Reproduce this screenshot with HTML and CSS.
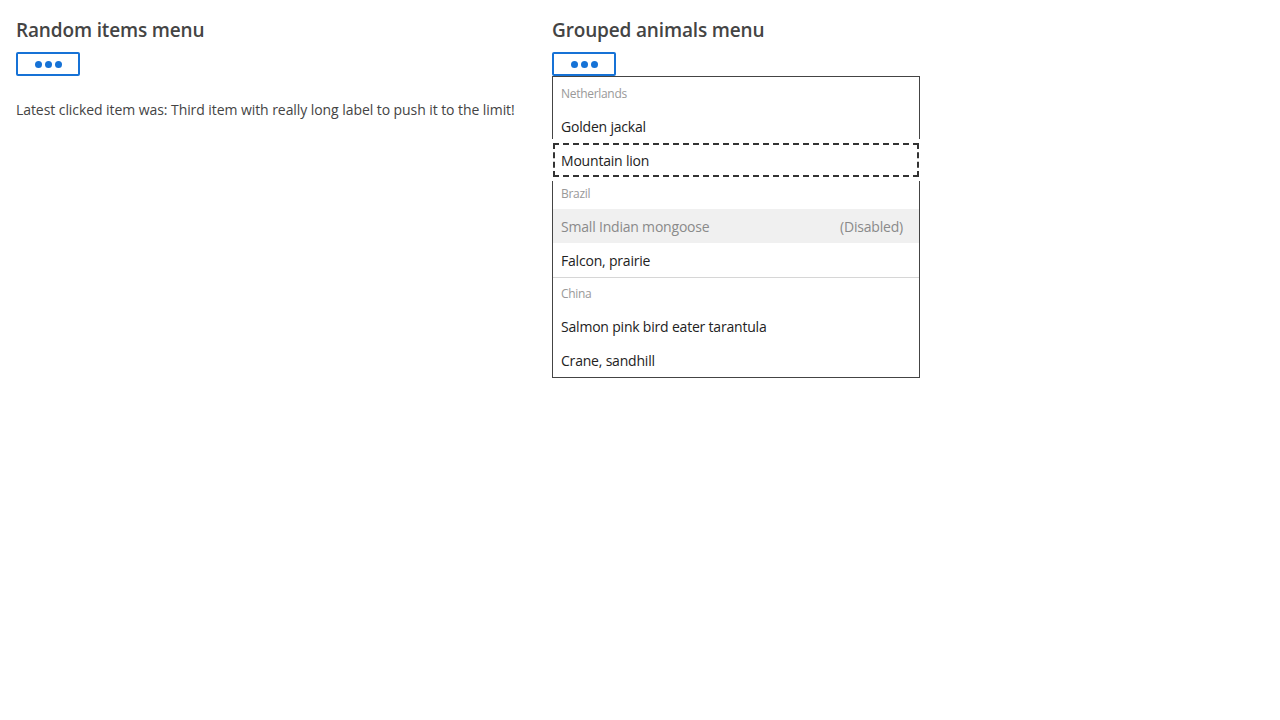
FILE: index.html
```html
<!DOCTYPE html>
<html lang="en">
<head>
<meta charset="utf-8">
<title>Menus</title>
<link rel="stylesheet" href="styles.css">
</head>
<body>
<main class="page">
  <section class="demo">
    <h2 class="demo-title">Random items menu</h2>
    <button class="menu-button" aria-label="Open menu"><span class="dot"></span><span class="dot"></span><span class="dot"></span></button>
    <p class="status">Latest clicked item was: Third item with really long label to push it to the limit!</p>
  </section>
  <section class="demo">
    <h2 class="demo-title">Grouped animals menu</h2>
    <div class="menu-anchor">
      <button class="menu-button" aria-label="Open menu" aria-expanded="true"><span class="dot"></span><span class="dot"></span><span class="dot"></span></button>
      <ul class="menu" role="menu">
        <li class="menu-group">Netherlands</li>
        <li class="menu-item" role="menuitem">Golden jackal</li>
        <li class="menu-item is-focused" role="menuitem">Mountain lion</li>
        <li class="menu-group">Brazil</li>
        <li class="menu-item is-disabled" role="menuitem" aria-disabled="true"><span>Small Indian mongoose</span><span class="hint">(Disabled)</span></li>
        <li class="menu-item" role="menuitem">Falcon, prairie</li>
        <li class="menu-separator" role="separator"></li>
        <li class="menu-group">China</li>
        <li class="menu-item" role="menuitem">Salmon pink bird eater tarantula</li>
        <li class="menu-item" role="menuitem">Crane, sandhill</li>
      </ul>
    </div>
  </section>
</main>
</body>
</html>
```
FILE: styles.css
```css
* { box-sizing: border-box; }
html, body { margin: 0; padding: 0; background: #fff; }
body {
  font-family: "Open Sans", "Noto Sans", sans-serif;
  color: #444;
  font-size: 14px;
}
.page {
  display: grid;
  grid-template-columns: 520px 520px;
  align-items: start;
  column-gap: 16px;
  min-height: 100vh;
  padding: 18px 16px;
}
.demo-title {
  margin: 0 0 10px;
  font-size: 19px;
  line-height: 24px;
  font-weight: 600;
  color: #444;
  letter-spacing: -0.15px;
}
.menu-button {
  display: flex;
  align-items: center;
  justify-content: center;
  gap: 3px;
  width: 64px;
  height: 24px;
  padding: 0;
  background: #fff;
  border: 2px solid #1672d6;
  border-radius: 2px;
  cursor: pointer;
}
.dot {
  width: 7px;
  height: 7px;
  border-radius: 50%;
  background: #1672d6;
}
.status {
  margin: 25px 0 0;
  line-height: 18px;
  letter-spacing: -0.07px;
}
.menu-anchor { position: relative; }
.menu {
  position: absolute;
  top: 24px;
  left: 0;
  width: 368px;
  margin: 0;
  padding: 0;
  list-style: none;
  background: #fff;
  border: 1px solid #444;
}
.menu-group {
  height: 32px;
  padding: 9px 8px 0;
  font-size: 12px;
  line-height: 16px;
  color: #999;
  letter-spacing: -0.3px;
}
.menu-item {
  display: flex;
  justify-content: space-between;
  align-items: center;
  height: 34px;
  padding: 0 16px 0 8px;
  font-size: 14px;
  color: #222;
  letter-spacing: -0.2px;
}
.menu-item.is-disabled {
  background: #f0f0f0;
  color: #8a8a8a;
}
.menu-item .hint { color: #8a8a8a; }
.menu-item.is-focused {
  outline: 2px dashed #333;
  outline-offset: -2px;
  box-shadow: 0 0 0 4px #fff;
}
.menu-separator {
  height: 1px;
  margin-bottom: -1px;
  background: #d6d6d6;
}
```
